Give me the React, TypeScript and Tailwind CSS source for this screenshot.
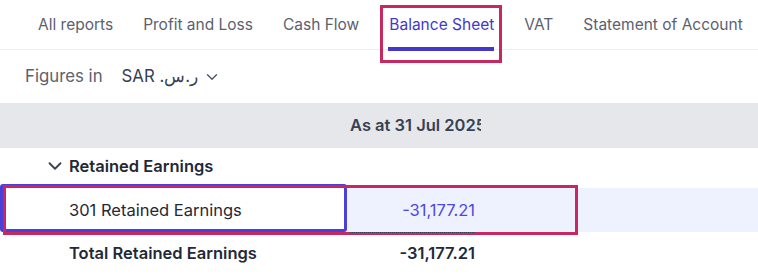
import { ChevronDown } from "lucide-react";

const tabs = ["All reports", "Profit and Loss", "Cash Flow", "Balance Sheet", "VAT", "Statement of Account"];

export default function App() {
  return (
    <div className="relative w-[758px] h-[275px] overflow-hidden bg-white text-[#1f2937]" style={{ fontFamily: "Inter, 'Noto Sans', sans-serif" }}>
      <nav className="flex h-[50px] items-center gap-[30px] border-b border-[#eceef1] pl-[38px] whitespace-nowrap">
        {tabs.map((t) => (
          <div
            key={t}
            className={
              "relative flex h-full items-center text-[15.5px] " +
              (t === "Balance Sheet" ? "text-[#4338ca]" : "text-[#5b616e]")
            }
          >
            {t}
            {t === "Balance Sheet" && (
              <>
                <span className="absolute left-[-1px] right-0 bottom-[-2px] h-[4px] bg-[#4338ca]" />
                <span className="absolute left-[-9px] right-[-8px] top-[5px] h-[58px] border-[3px] border-[#c8285f]" />
              </>
            )}
          </div>
        ))}
      </nav>

      <div className="flex h-[53px] items-center pl-[25px] text-[16.8px]">
        <span className="text-[#5b616e]">Figures in</span>
        <span className="ml-[19px] text-[#374151]">
          SAR <span dir="rtl">ر.س.</span>
        </span>
        <ChevronDown className="ml-[5px] h-[18px] w-[18px] text-[#4b5563]" strokeWidth={1.8} />
      </div>

      <div className="flex h-[45px] items-center bg-[#e6e7ea] text-[16.5px]">
        <div className="w-[347px]" />
        <div className="w-[134px] overflow-hidden whitespace-nowrap pl-[3px] font-semibold text-[#374151]">As at 31 Jul 2025</div>
      </div>

      <div className="flex h-[40px] items-center pb-[4px] pl-[44px] text-[16.5px] font-semibold">
        <ChevronDown className="h-[22px] w-[22px] text-[#374151]" strokeWidth={2} />
        <span className="ml-[3px]">Retained Earnings</span>
      </div>

      <div className="relative flex h-[44px] items-center bg-[#eef2fe] text-[16.5px]">
        <div className="flex h-full w-[347px] items-center bg-white pl-[69px]">301 Retained Earnings</div>
        <div className="w-[128px] text-right text-[#4f46e5]">-31,177.21</div>
        <span className="absolute left-0 top-[-4px] h-[48px] w-[347px] rounded-[3px] border-[3px] border-[#4a3fd6]" />
        <span className="absolute left-[3px] top-[-3px] h-[50px] w-[575px] border-[3px] border-[#c8285f]" />
      </div>

      <div className="flex h-[43px] items-center text-[16.5px] font-semibold">
        <div className="w-[347px] pl-[69px]">Total Retained Earnings</div>
        <div className="relative w-[128px] text-right">
          <span className="absolute left-[3px] right-0 top-[-9px] border-t border-dotted border-[#374151]" />
          -31,177.21
        </div>
      </div>
    </div>
  );
}
